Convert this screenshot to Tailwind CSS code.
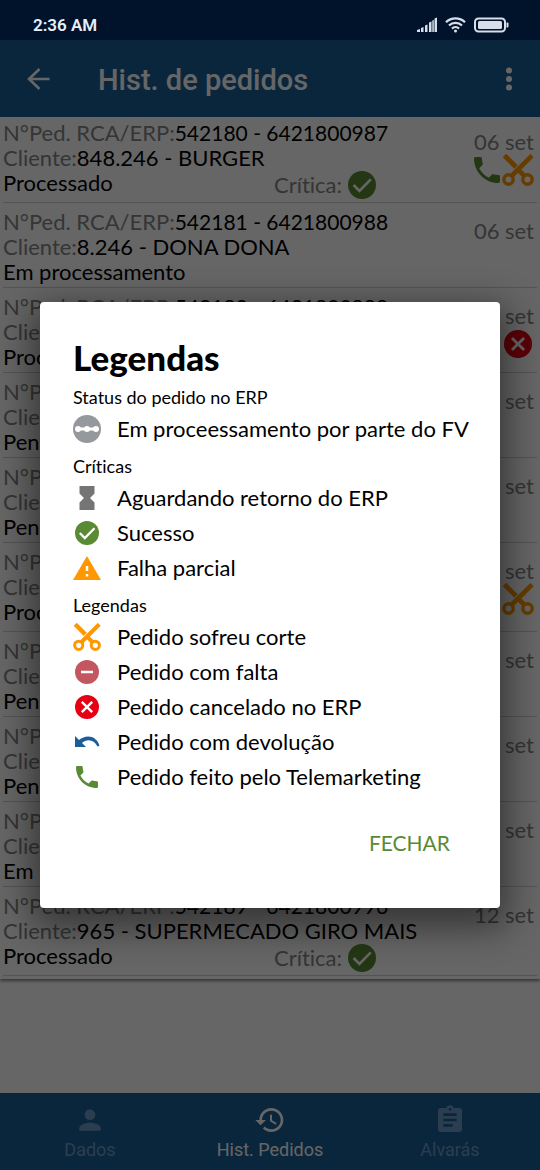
<!DOCTYPE html>
<html lang="pt-BR">
<head>
<meta charset="utf-8">
<meta name="viewport" content="width=device-width, initial-scale=1">
<title>Hist. de pedidos</title>
<script src="https://cdn.jsdelivr.net/npm/@tailwindcss/browser@4"></script>
</head>
<body class="bg-[#00132a]">
<svg class="hidden">
  <symbol id="check" viewBox="0 0 24 24"><circle cx="12" cy="12" r="12" fill="currentColor"/><path d="M4.800 12l5 5L19.500 7.200" fill="none" stroke="#fff" stroke-width="2.300"/></symbol>
  <symbol id="scissors" viewBox="0 0 32 32"><g fill="none" stroke="currentColor"><g stroke-width="3.400"><circle cx="6.500" cy="25.500" r="4.700"/><circle cx="25.500" cy="25.500" r="4.700"/></g><path d="M9.500 22L30 1.500M22.500 22l-5-5" stroke-width="4.600"/><path d="M2.500 1.500L14 13" stroke-width="5"/></g></symbol>
  <symbol id="phone" viewBox="3 3 18 18"><path fill="currentColor" d="M6.620 10.790c1.440 2.830 3.760 5.140 6.590 6.590l2.200-2.200c.27-.27.67-.36 1.020-.24 1.120.37 2.330.57 3.570.57.55 0 1 .45 1 1V20c0 .55-.45 1-1 1-9.390 0-17-7.610-17-17 0-.55.45-1 1-1h3.500c.55 0 1 .45 1 1 0 1.250.2 2.450.57 3.570.11.35.03.74-.25 1.020l-2.200 2.200z"/></symbol>
  <symbol id="cancel" viewBox="0 0 24 24"><circle cx="12" cy="12" r="12" fill="currentColor"/><path d="M6.800 6.800l10.400 10.400M17.200 6.800L6.800 17.200" stroke="#fff" stroke-width="2.400"/></symbol>
</svg>
<div class="flex min-h-screen flex-col font-[Lato,sans-serif] text-black [font-variant-ligatures:none]">
  <header class="flex h-10 items-center justify-between pt-[9px] pr-[31px] pl-[33px]">
    <span class="font-[Roboto,sans-serif] text-[17px] leading-5 font-semibold text-[#e6effa]">2:36 AM</span>
    <div class="flex items-center gap-2 text-[#d8dfea]">
      <svg class="h-4 w-5" viewBox="0 0 20 16" fill="currentColor"><path d="M0 13l3-1v3H0zM4 11l2.500-1v5H4zM8 8.500l2.500-1V15H8zM12 5.500l2.500-1V15H12zM15.300 3.500l1.500-.6V15h-1.500zM17.500 1.500L20 .5V15h-2.500z"/></svg>
      <svg class="h-4 w-[21px]" viewBox="0 0 21 16" fill="none" stroke="currentColor" stroke-width="2.300"><path d="M1 5.200a13.600 13.600 0 0 1 19 0M4 8.500a9.300 9.300 0 0 1 13 0M7 11.600a5 5 0 0 1 7 0"/><circle cx="10.500" cy="14" r="1.500" fill="currentColor" stroke="none"/></svg>
      <svg class="h-4 w-[35px]" viewBox="0 0 35 16"><rect x="1" y="1.500" width="30" height="13" rx="3.500" fill="none" stroke="currentColor" stroke-width="2"/><rect x="4" y="4" width="24" height="8" rx="1.500" fill="currentColor"/><path d="M32.500 5.500h1q1 0 1 1v3q0 1-1 1h-1z" fill="currentColor"/></svg>
    </div>
  </header>

  <div class="relative flex grow flex-col bg-white">
    <div class="flex h-[77px] items-center bg-[#1a5f99] px-6 font-[Roboto,sans-serif] text-white">
      <button type="button" aria-label="Voltar"><svg class="size-7" viewBox="0 0 28 28" fill="none" stroke="currentColor" stroke-width="2.600"><path d="M25.500 14H5M15.500 4L5 14l10.500 10"/></svg></button>
      <h1 class="ml-[46px] grow pt-[3px] text-[29px] leading-9 font-medium">Hist. de pedidos</h1>
      <button type="button" aria-label="Mais opções" class="px-1"><svg class="h-6 w-[6px]" viewBox="0 0 6 24" fill="currentColor"><circle cx="3" cy="3.500" r="3"/><circle cx="3" cy="12" r="3"/><circle cx="3" cy="20.500" r="3"/></svg></button>
    </div>

    <main class="grow">
      <ul id="orders" class="shadow-[0_2px_3px_#0007]"></ul>
    </main>

    <nav class="grid h-[77px] grid-cols-3 bg-[#1a5f99] pt-[11px] font-[Roboto,sans-serif] text-[18px] leading-6">
      <a href="#dados" class="flex flex-col items-center gap-[2px] text-[#6d9cc5]"><svg class="size-8" viewBox="0 0 24 24" fill="currentColor"><circle cx="12" cy="8" r="4"/><path d="M12 14c-2.670 0-8 1.340-8 4v2h16v-2c0-2.660-5.330-4-8-4z"/></svg>Dados</a>
      <a href="#historico" class="flex flex-col items-center gap-[2px] text-white"><svg class="size-8" viewBox="0 0 24 24" fill="currentColor"><path d="M13 3c-4.970 0-9 4.030-9 9H1l3.890 3.890.07.14L9 12H6c0-3.870 3.130-7 7-7s7 3.130 7 7-3.130 7-7 7c-1.930 0-3.680-.79-4.940-2.060l-1.420 1.420C8.270 19.990 10.510 21 13 21c4.970 0 9-4.030 9-9s-4.030-9-9-9zm-1 5v5l4.280 2.540.72-1.210-3.500-2.080V8H12z"/></svg>Hist. Pedidos</a>
      <a href="#alvaras" class="flex flex-col items-center gap-[2px] text-[#6d9cc5]"><svg class="size-8" viewBox="0 0 24 24" fill="currentColor"><path d="M19 3h-4.180C14.400 1.840 13.300 1 12 1c-1.300 0-2.400.84-2.820 2H5c-1.100 0-2 .9-2 2v14c0 1.100.9 2 2 2h14c1.100 0 2-.9 2-2V5c0-1.100-.9-2-2-2zm-7 0c.55 0 1 .45 1 1s-.45 1-1 1-1-.45-1-1 .45-1 1-1zm2 14H7v-2h7v2zm3-4H7v-2h10v2zm0-4H7V7h10v2z"/></svg>Alvarás</a>
    </nav>

    <div class="absolute inset-0 flex items-center justify-center bg-black/60 px-10">
      <section role="dialog" aria-modal="true" aria-labelledby="dlg" class="w-full rounded-[4px] bg-white px-[33px] pt-[35px] pb-[47px] shadow-[0_12px_36px_8px_#0007]">
        <h2 id="dlg" class="text-[35px] leading-10 font-black">Legendas</h2>
        <h3 class="mt-[7px] text-[18px] leading-[27px]">Status do pedido no ERP</h3>
        <ul class="text-[22px]">
          <li class="flex h-[35px] items-center gap-4 whitespace-nowrap"><svg class="size-7 shrink-0" viewBox="0 0 28 28"><circle cx="14" cy="14" r="14" fill="#95989c"/><path d="M5 14h18" stroke="#fff" stroke-width="3"/><g fill="#fff"><circle cx="5" cy="14" r="3"/><circle cx="14" cy="14" r="3"/><circle cx="23" cy="14" r="3"/></g></svg>Em proceessamento por parte do FV</li>
        </ul>
        <h3 class="mt-[7px] text-[18px] leading-[27px]">Críticas</h3>
        <ul class="text-[22px]">
          <li class="flex h-[35px] items-center gap-4"><svg class="size-7" viewBox="0 0 28 28"><path d="M6.500 2h15v7.500L17 14l4.500 4.500V26h-15v-7.500L11 14 6.500 9.500z" fill="#757575"/></svg>Aguardando retorno do ERP</li>
          <li class="flex h-[35px] items-center gap-4"><svg class="size-7 p-[2px] text-[#5b8a35]"><use href="#check"/></svg>Sucesso</li>
          <li class="flex h-[35px] items-center gap-4"><svg class="size-7" viewBox="0 0 28 28"><path d="M14 2l14 24H0z" fill="#ff9800"/><path d="M14 12v5M14 20v2.500" stroke="#fff" stroke-width="2.500"/></svg>Falha parcial</li>
        </ul>
        <h3 class="mt-[7px] text-[18px] leading-[27px]">Legendas</h3>
        <ul class="text-[22px]">
          <li class="flex h-[35px] items-center gap-4"><svg class="size-7 text-[#ff9800]"><use href="#scissors"/></svg>Pedido sofreu corte</li>
          <li class="flex h-[35px] items-center gap-4"><svg class="size-7" viewBox="0 0 28 28"><circle cx="14" cy="14" r="12" fill="#c4565f"/><path d="M8 14h12" stroke="#fff" stroke-width="2.500"/></svg>Pedido com falta</li>
          <li class="flex h-[35px] items-center gap-4"><svg class="size-7 p-[2px] text-[#e60012]"><use href="#cancel"/></svg>Pedido cancelado no ERP</li>
          <li class="flex h-[35px] items-center gap-4"><svg class="size-7" viewBox="0 0 28 28"><path d="M2 8v11h11l-4-4C14 10.500 21 11.500 24.500 18.500l2-.8C24 8 13.500 5.500 6 12z" fill="#1a5f99"/></svg>Pedido com devolução</li>
          <li class="flex h-[35px] items-center gap-4"><svg class="size-7 p-[3px] text-[#5b8a35]"><use href="#phone"/></svg>Pedido feito pelo Telemarketing</li>
        </ul>
        <div class="mt-[31px] flex justify-end pr-[9px]"><button type="button" class="h-9 px-2 text-[21px] text-[#5b8a35]">FECHAR</button></div>
      </section>
    </div>
  </div>
</div>

<script>
const icons = {
  phone: '<svg class="size-[26px] text-[#5b8a35]"><use href="#phone"/></svg>',
  scissors: '<svg class="size-8 text-[#ff9800]"><use href="#scissors"/></svg>',
  cancel: '<svg class="mr-[2px] size-7 text-[#e60012]"><use href="#cancel"/></svg>'
};
const orders = [
  ['542180 - 6421800987', '848.246 - BURGER', 'Processado', '06 set', true, ['phone', 'scissors']],
  ['542181 - 6421800988', '8.246 - DONA DONA', 'Em processamento', '06 set', false, []],
  ['542182 - 6421800989', '', 'Processado', '06 set', false, ['cancel']],
  ['542183 - 6421800990', '', 'Pendente', '06 set', false, []],
  ['542184 - 6421800991', '', 'Pendente', '06 set', false, []],
  ['542185 - 6421800992', '', 'Processado', '06 set', true, ['scissors']],
  ['542186 - 6421800993', '', 'Pendente', '06 set', false, []],
  ['542187 - 6421800994', '', 'Pendente', '06 set', false, []],
  ['542188 - 6421800995', '', 'Em processamento', '06 set', false, []],
  ['542189 - 6421800996', '965 - SUPERMECADO GIRO MAIS', 'Processado', '12 set', true, []]
];
document.getElementById('orders').innerHTML = orders.map(([num, client, status, date, critic, marks]) => `
  <li class="pb-[3px]">
    <div class="mx-[3px] flex justify-between border-b border-[#d2d2d2] pt-[3px] pb-[3px] text-[22px] leading-[25px]">
      <div class="grow whitespace-nowrap">
        <p><span class="text-[#858585]">N°Ped. RCA/ERP:</span><span class="text-[21px]">${num}</span></p>
        <p><span class="text-[#858585]">Cliente:</span>${client}</p>
        <div class="flex"><p class="w-[271px]">${status}</p>${critic ? '<p class="flex h-[29px] items-center text-[#858585]">Crítica:<svg class="ml-[6px] size-7 text-[#5b8a35]"><use href="#check"/></svg></p>' : ''}</div>
      </div>
      <div class="flex flex-col items-end pt-[9px] pr-[3px] whitespace-nowrap text-[#858585]">
        <span>${date}</span>
        <div class="flex h-8 items-center gap-[2px]">${marks.map(m => icons[m]).join('')}</div>
      </div>
    </div>
  </li>`).join('');
</script>
</body>
</html>
